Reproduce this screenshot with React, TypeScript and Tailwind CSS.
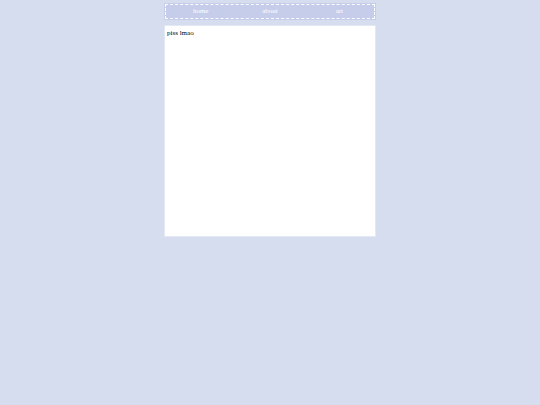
import React from 'react';

export default function App() {
  const navItems = ['home', 'about', 'art'];

  return (
    <div className="min-h-[405px] w-full bg-[#d5ddef] pt-[3px] font-['Liberation_Serif','Times_New_Roman',serif]">
      <div className="mx-auto w-[212px]">
        {/* Nav */}
        <nav className="h-[17px] bg-[#c5cdea] p-px">
          <div className="grid h-full grid-cols-3 items-center border border-dashed border-white text-[7px] text-white">
            {navItems.map((item) => (
              <a key={item} href="#" className="text-center leading-none">
                {item}
              </a>
            ))}
          </div>
        </nav>

        {/* Content */}
        <main className="mt-[5px] h-[212px] border border-[#e3e8f4] bg-white px-[2px] pt-[2px] text-[7px] leading-[10px] text-black">
          <p>piss lmao</p>
        </main>
      </div>
    </div>
  );
}
